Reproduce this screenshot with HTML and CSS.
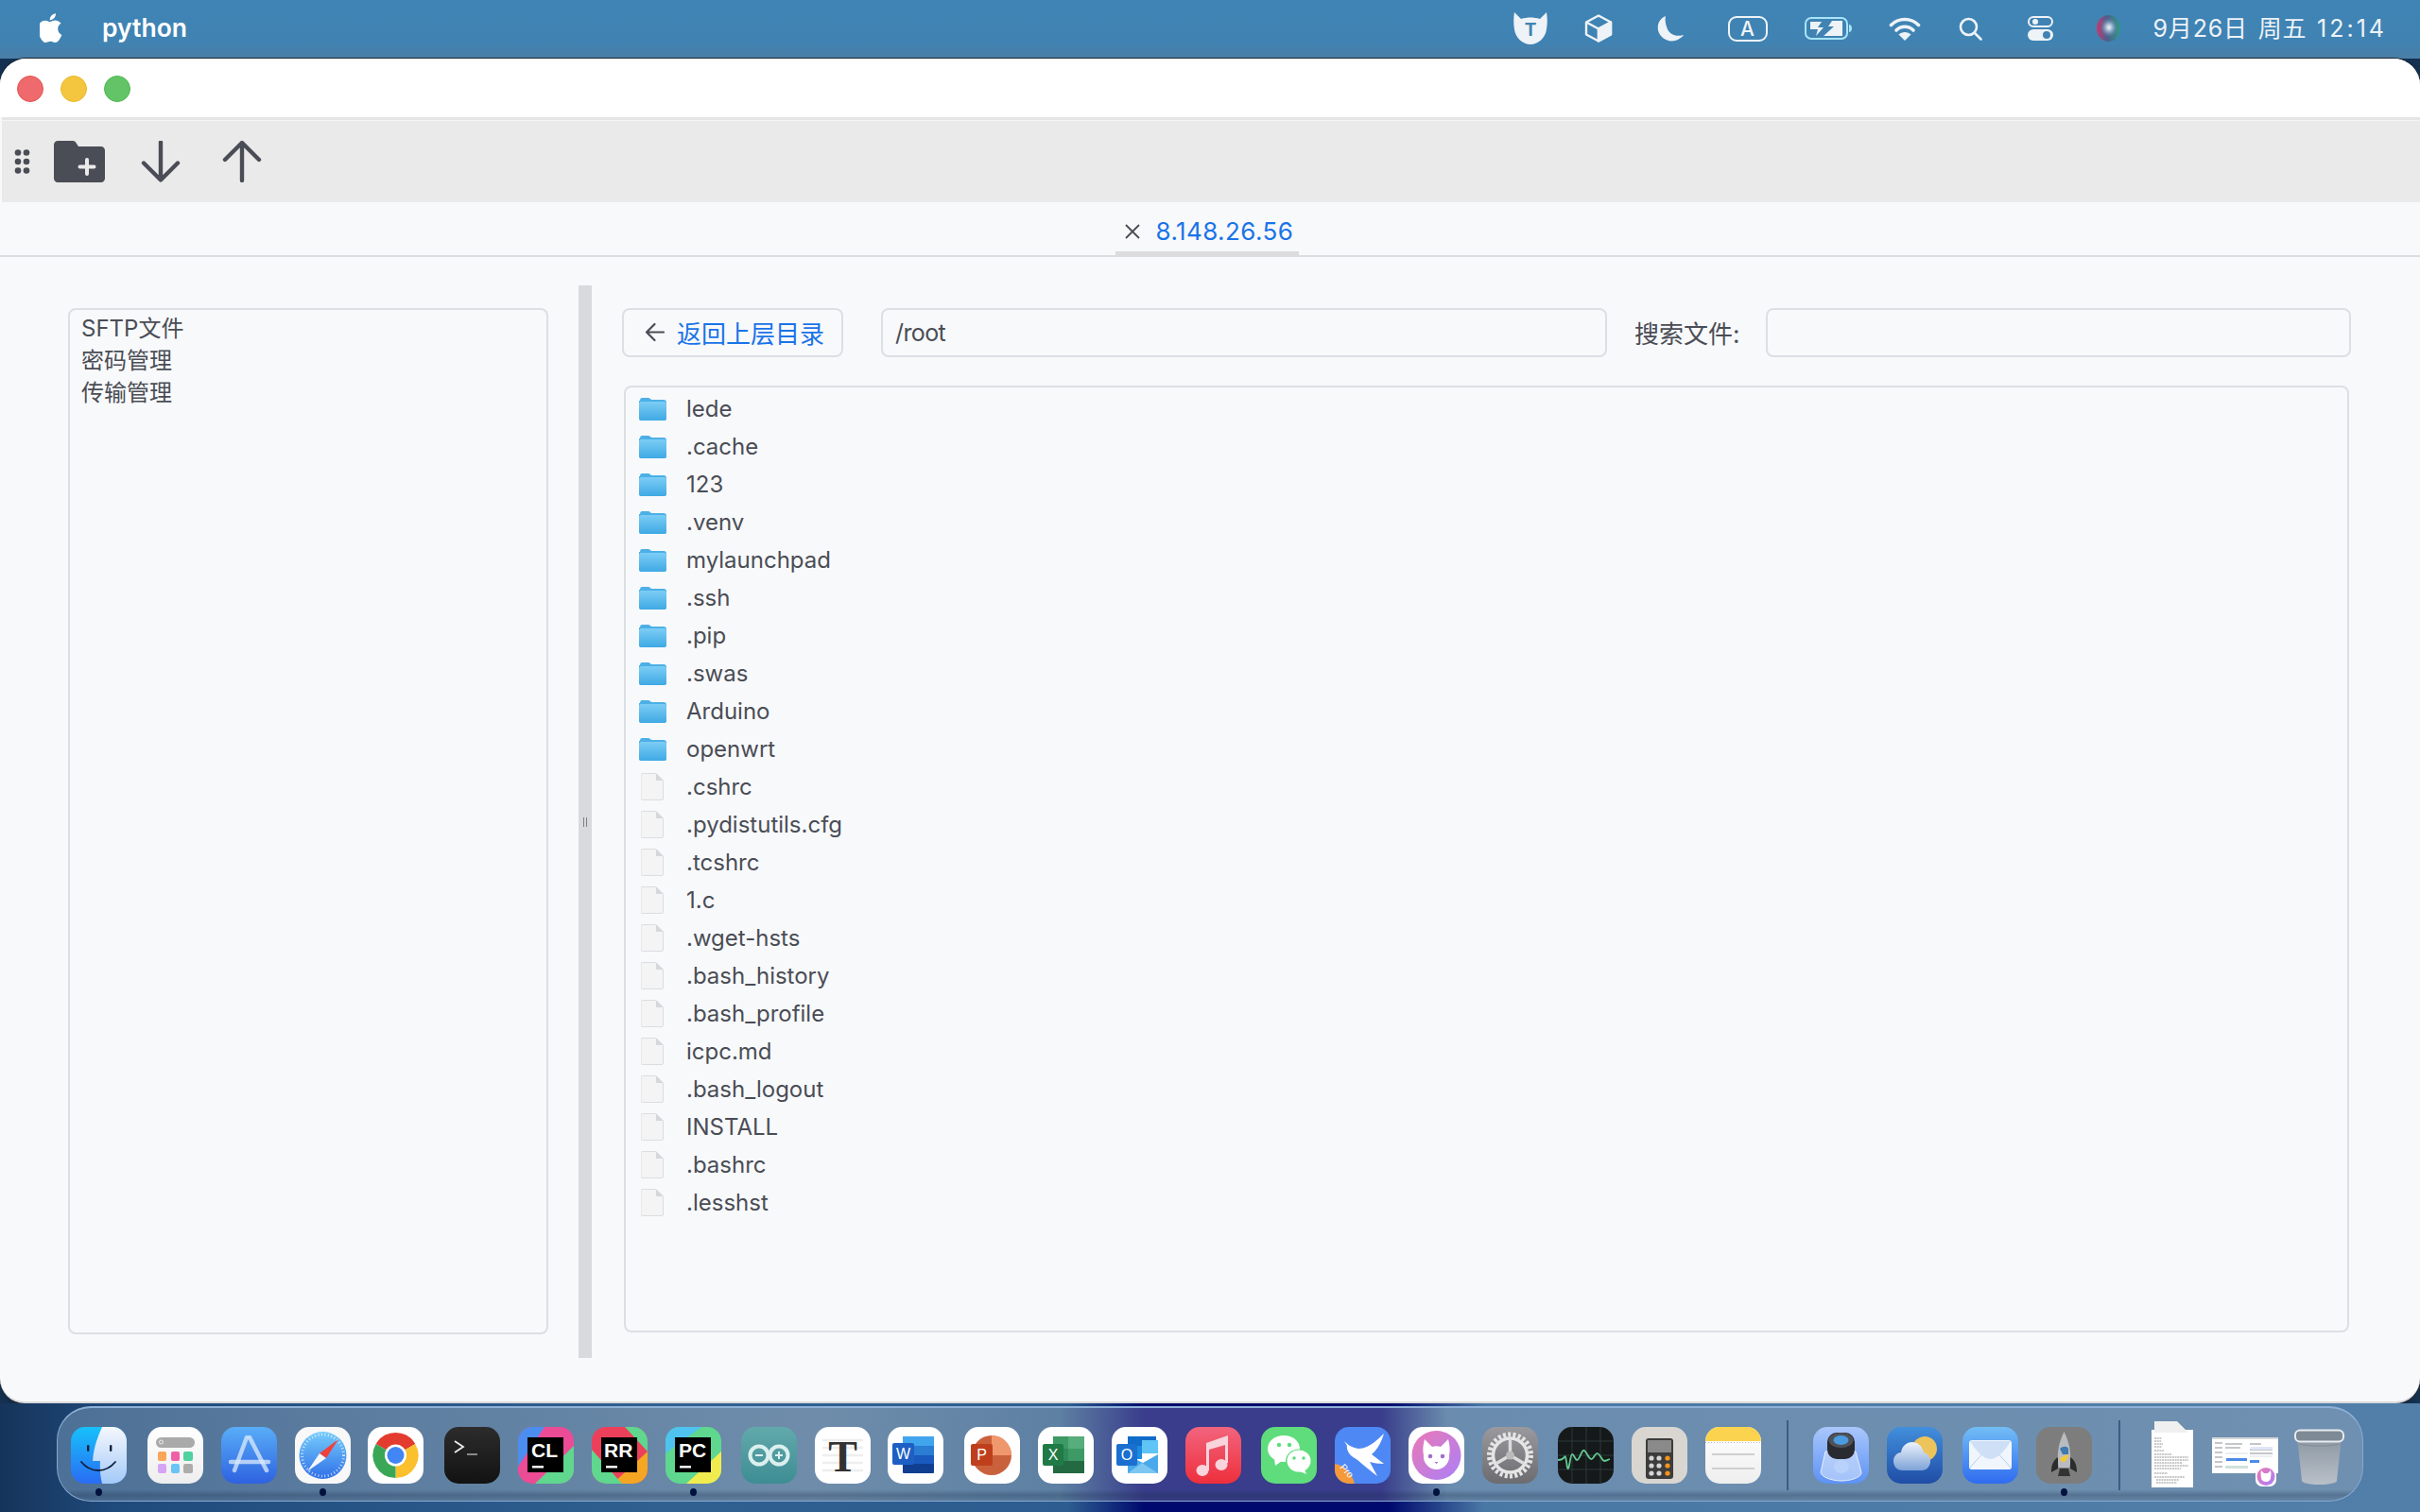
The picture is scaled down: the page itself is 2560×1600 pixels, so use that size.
FILE: index.html
```html
<!DOCTYPE html>
<html lang="zh">
<head>
<meta charset="utf-8">
<title>python</title>
<link rel="stylesheet" href="styles.css">
</head>
<body>
<svg class="defs" aria-hidden="true">
  <defs>
    <linearGradient id="gFolder" x1="0" y1="0" x2="0" y2="1"><stop offset="0" stop-color="#7ccdf5"/><stop offset="1" stop-color="#3fa9e4"/></linearGradient>
    <linearGradient id="gFinder" x1="0" y1="0" x2="0" y2="1"><stop offset="0" stop-color="#17c1fb"/><stop offset="1" stop-color="#2a6cf3"/></linearGradient>
    <linearGradient id="gFace" x1="0" y1="0" x2="0" y2="1"><stop offset="0" stop-color="#f5f7fd"/><stop offset="1" stop-color="#a3caf8"/></linearGradient>
    <linearGradient id="gStore" x1="0" y1="0" x2="0" y2="1"><stop offset="0" stop-color="#58adf8"/><stop offset="1" stop-color="#2e62e0"/></linearGradient>
    <linearGradient id="gSafari" x1="0" y1="0" x2="0" y2="1"><stop offset="0" stop-color="#76cdfb"/><stop offset="1" stop-color="#2f6fe8"/></linearGradient>
    <linearGradient id="gTerm" x1="0" y1="0" x2="0" y2="1"><stop offset="0" stop-color="#2c2c2c"/><stop offset="1" stop-color="#121212"/></linearGradient>
    <linearGradient id="gArd" x1="0" y1="0" x2="0" y2="1"><stop offset="0" stop-color="#62a9ab"/><stop offset="1" stop-color="#3d8d94"/></linearGradient>
    <linearGradient id="gMusic" x1="0" y1="0" x2="0" y2="1"><stop offset="0" stop-color="#f2647d"/><stop offset="1" stop-color="#ee2f3c"/></linearGradient>
    <linearGradient id="gCat" x1="0" y1="0" x2="1" y2="1"><stop offset="0" stop-color="#ec78b4"/><stop offset="1" stop-color="#aa80f8"/></linearGradient>
    <linearGradient id="gGear" x1="0" y1="0" x2="0" y2="1"><stop offset="0" stop-color="#9a9a9e"/><stop offset="1" stop-color="#6c6c70"/></linearGradient>
    <linearGradient id="gPrev" x1="0" y1="0" x2="0" y2="1"><stop offset="0" stop-color="#a9c7fb"/><stop offset="1" stop-color="#5e92f5"/></linearGradient>
    <linearGradient id="gWeather" x1="0" y1="0" x2="0" y2="1"><stop offset="0" stop-color="#428fdc"/><stop offset="1" stop-color="#1f4da6"/></linearGradient>
    <linearGradient id="gCloud" x1="0" y1="0" x2="0" y2="1"><stop offset="0" stop-color="#eef3fb"/><stop offset="1" stop-color="#7ea3d8"/></linearGradient>
    <linearGradient id="gMail" x1="0" y1="0" x2="0" y2="1"><stop offset="0" stop-color="#72bdf5"/><stop offset="1" stop-color="#2f6cf0"/></linearGradient>
    <linearGradient id="gNoteW" x1="0" y1="0" x2="0" y2="1"><stop offset="0" stop-color="#ffffff"/><stop offset="1" stop-color="#eeeeee"/></linearGradient>
    <linearGradient id="gTrash" x1="0" y1="0" x2="0" y2="1"><stop offset="0" stop-color="#8b96a2"/><stop offset="1" stop-color="#b9c0c8"/></linearGradient>
    <linearGradient id="gSiriB" x1="0" y1="0" x2="1" y2="0"><stop offset="0" stop-color="#c9376f"/><stop offset=".45" stop-color="#4a5f8c"/><stop offset="1" stop-color="#2f9a86"/></linearGradient>
    <radialGradient id="gSiri"><stop offset="0" stop-color="#f2f6fa"/><stop offset=".35" stop-color="#a8bfd8" stop-opacity=".9"/><stop offset="1" stop-color="#4a6f9f" stop-opacity="0"/></radialGradient>
    <clipPath id="clipSq"><rect width="59" height="60" rx="15"/></clipPath>
    <symbol id="folder" viewBox="0 0 29 25">
      <path d="M1 4C1 2 2 1 3 1h7c1 0 2 1 3 2h13c2 0 3 1 3 3v16c0 2-1 3-3 3H3c-2 0-3-1-3-3V4z" fill="#4cb0e6"/>
      <rect y="5" width="29" height="20" rx="2.5" fill="url(#gFolder)"/>
    </symbol>
    <symbol id="file" viewBox="0 0 24 29">
      <path d="M1.5.5H16L23.5 8v19a1.500 1.500 0 0 1-1.500 1.500h-20.500A1.500 1.500 0 0 1 0 27V2A1.500 1.500 0 0 1 1.500.5z" fill="#f4f4f5" stroke="#dcdde0"/>
      <path d="M16 .5V7a1 1 0 0 0 1 1h6.500z" fill="#d6d7da"/>
    </symbol>
  </defs>
</svg>

<div class="desktop">
  <header class="menubar">
    <svg class="apple" viewBox="3 0.500 19 22.500"><path fill="#fff" d="M17.050 12.540c-.03-2.850 2.330-4.220 2.440-4.290-1.330-1.940-3.400-2.210-4.130-2.240-1.760-.18-3.430 1.030-4.320 1.030-.89 0-2.270-1.010-3.730-.98-1.920.03-3.690 1.120-4.680 2.830-2 3.460-.51 8.580 1.430 11.390.95 1.370 2.080 2.920 3.560 2.860 1.430-.06 1.970-.92 3.700-.92 1.730 0 2.210.92 3.720.89 1.540-.03 2.510-1.400 3.450-2.780 1.090-1.590 1.530-3.130 1.560-3.210-.03-.02-2.990-1.150-3.010-4.580zM14.200 4.160c.79-.96 1.320-2.280 1.180-3.600-1.130.05-2.510.76-3.320 1.710-.73.84-1.370 2.190-1.200 3.480 1.260.1 2.550-.64 3.340-1.590z"/></svg>
    <span class="appname">python</span>
    <div class="status">
      <svg class="st st-cat" viewBox="0 0 36 34"><path fill="#eef3f7" d="M1 0l7 7c7-2 13-2 20 0l7-7c1 6 1 12 0 18-1 9-9 16-17 16S2 27 1 18C0 12 0 6 1 0z"/><text x="18" y="25" text-anchor="middle" class="st-t">T</text></svg>
      <svg class="st st-box" viewBox="0 0 30 30" fill="none" stroke="#eef3f7" stroke-width="2.400" stroke-linejoin="round"><path d="M15 1.500l13 7v13l-13 7-13-7v-13z"/><path d="M2 8.500l13 7v13M15 15.500l13-7"/><path d="M15 15.500l13-7v13l-13 7z" fill="#eef3f7"/></svg>
      <svg class="st st-moon" viewBox="0 0 28 27"><path fill="#eef3f7" d="M9 0C2 3 0 9 1 15c2 8 10 13 18 11 4-1 7-3 9-6-8 2-14 0-17-6C9 9 8 4 9 0z"/></svg>
      <div class="st st-a">A</div>
      <svg class="st st-bat" viewBox="0 0 51 24"><rect x="1" y="1" width="44" height="22" rx="6" fill="none" stroke="#a8e4f7" stroke-width="2"/><path d="M47 8c2 0 3 2 3 4s-1 4-3 4z" fill="#a8e4f7"/><path d="M5 5h13l-4 6h6l-8 9 2-7H6V5z" fill="#eef3f7"/><path d="M26 4h14v16H20l7-8h-4l3-8z" fill="#eef3f7"/><path d="M24 4l-4 8h5l-5 8 11-10h-6l4-6z" fill="#4083b3"/></svg>
      <svg class="st st-wifi" viewBox="0 0 34 25" fill="none" stroke="#eef3f7" stroke-width="3.600" stroke-linecap="round"><path d="M2.500 8.500C10.500 .5 23.500 .5 31.500 8.500"/><path d="M8 14c5-5 13-5 18 0"/><path d="M17 25l-6.500-6.500c3.500-3.500 9.500-3.500 13 0z" fill="#eef3f7" stroke="none"/></svg>
      <svg class="st st-search" viewBox="0 0 25 25" fill="none" stroke="#eef3f7" stroke-width="2.600" stroke-linecap="round"><circle cx="10.500" cy="10.500" r="8.500"/><path d="M17 17l6.500 6.500"/></svg>
      <svg class="st st-toggle" viewBox="0 0 27 26"><rect x="1" y="1" width="25" height="10" rx="5" fill="none" stroke="#eef3f7" stroke-width="2"/><circle cx="8" cy="6" r="3" fill="#eef3f7"/><rect y="14" width="27" height="12" rx="6" fill="#eef3f7"/><circle cx="20" cy="20" r="4" fill="#4083b3"/></svg>
      <svg class="st st-siri" viewBox="0 0 25 28"><ellipse cx="12.500" cy="14" rx="12.500" ry="14" fill="url(#gSiriB)"/><ellipse cx="13" cy="13" rx="10" ry="11" fill="url(#gSiri)"/></svg>
      <span class="clock">9月26日 周五 <span class="time">12:14</span></span>
    </div>
  </header>

  <main class="window">
    <div class="titlebar">
      <span class="light light-r"></span>
      <span class="light light-y"></span>
      <span class="light light-g"></span>
    </div>
    <div class="toolbar">
      <svg class="grip" viewBox="0 0 17 26"><g fill="#4a4d55"><circle cx="4" cy="3.500" r="3.300"/><circle cx="13" cy="3.500" r="3.300"/><circle cx="4" cy="13" r="3.300"/><circle cx="13" cy="13" r="3.300"/><circle cx="4" cy="22.500" r="3.300"/><circle cx="13" cy="22.500" r="3.300"/></g></svg>
      <svg class="tool-folder" viewBox="0 0 54 44"><path fill="#4a4d55" d="M4 0h16c2 0 3 1 4 3l2 3h24c2 0 4 2 4 4v30c0 2-2 4-4 4H4c-2 0-4-2-4-4V4c0-2 2-4 4-4z"/><path d="M35 20v15M27.500 27.500h15" stroke="#eaeaea" stroke-width="4" stroke-linecap="round"/></svg>
      <svg class="tool-arrow" viewBox="0 0 42 44" fill="none" stroke="#4a4d55" stroke-width="4.400" stroke-linecap="round" stroke-linejoin="round"><path d="M21 2v39M3 24l18 18 18-18" transform="translate(0 -0.500)"/></svg>
      <svg class="tool-arrow tool-up" viewBox="0 0 42 44" fill="none" stroke="#4a4d55" stroke-width="4.400" stroke-linecap="round" stroke-linejoin="round"><path d="M21 42V3M3 20L21 2l18 18"/></svg>
    </div>
    <div class="tabs">
      <div class="tab">
        <svg class="tab-x" viewBox="0 0 16 16" fill="none" stroke="#4a4d55" stroke-width="1.800"><path d="M1 1l14 14M15 1L1 15"/></svg>
        <span class="tab-label">8.148.26.56</span>
      </div>
    </div>
    <div class="pane">
      <aside class="left">
        <ul class="menu">
          <li>SFTP文件</li>
          <li>密码管理</li>
          <li>传输管理</li>
        </ul>
      </aside>
      <div class="splitter"><span class="handle"></span></div>
      <section class="right">
        <div class="pathbar">
          <button class="back">
            <svg class="back-arrow" viewBox="0 0 21 21" fill="none" stroke="#4a4d55" stroke-width="2.200" stroke-linecap="round" stroke-linejoin="round"><path d="M20 10.500H2M10.500 2L2 10.500l8.500 8.500"/></svg>
            <span>返回上层目录</span>
          </button>
          <div class="field field-path">/root</div>
          <label class="search-label">搜索文件:</label>
          <div class="field field-search"></div>
        </div>
        <div class="files">
          <div class="row"><svg class="ic-folder"><use href="#folder"/></svg><span>lede</span></div>
          <div class="row"><svg class="ic-folder"><use href="#folder"/></svg><span>.cache</span></div>
          <div class="row"><svg class="ic-folder"><use href="#folder"/></svg><span>123</span></div>
          <div class="row"><svg class="ic-folder"><use href="#folder"/></svg><span>.venv</span></div>
          <div class="row"><svg class="ic-folder"><use href="#folder"/></svg><span>mylaunchpad</span></div>
          <div class="row"><svg class="ic-folder"><use href="#folder"/></svg><span>.ssh</span></div>
          <div class="row"><svg class="ic-folder"><use href="#folder"/></svg><span>.pip</span></div>
          <div class="row"><svg class="ic-folder"><use href="#folder"/></svg><span>.swas</span></div>
          <div class="row"><svg class="ic-folder"><use href="#folder"/></svg><span>Arduino</span></div>
          <div class="row"><svg class="ic-folder"><use href="#folder"/></svg><span>openwrt</span></div>
          <div class="row"><svg class="ic-file"><use href="#file"/></svg><span>.cshrc</span></div>
          <div class="row"><svg class="ic-file"><use href="#file"/></svg><span>.pydistutils.cfg</span></div>
          <div class="row"><svg class="ic-file"><use href="#file"/></svg><span>.tcshrc</span></div>
          <div class="row"><svg class="ic-file"><use href="#file"/></svg><span>1.c</span></div>
          <div class="row"><svg class="ic-file"><use href="#file"/></svg><span>.wget-hsts</span></div>
          <div class="row"><svg class="ic-file"><use href="#file"/></svg><span>.bash_history</span></div>
          <div class="row"><svg class="ic-file"><use href="#file"/></svg><span>.bash_profile</span></div>
          <div class="row"><svg class="ic-file"><use href="#file"/></svg><span>icpc.md</span></div>
          <div class="row"><svg class="ic-file"><use href="#file"/></svg><span>.bash_logout</span></div>
          <div class="row"><svg class="ic-file"><use href="#file"/></svg><span>INSTALL</span></div>
          <div class="row"><svg class="ic-file"><use href="#file"/></svg><span>.bashrc</span></div>
          <div class="row"><svg class="ic-file"><use href="#file"/></svg><span>.lesshst</span></div>
        </div>
      </section>
    </div>
  </main>

  <footer class="dock-area">
    <nav class="dock">
      <div class="di"><svg viewBox="0 0 59 60"><rect width="59" height="60" rx="15" fill="url(#gFinder)"/><path clip-path="url(#clipSq)" d="M33 0C28 11 24 22 23 36h8c-.5 8 0 16 2 24h26V0z" fill="url(#gFace)"/><g fill="#10203f"><rect x="17" y="19" width="2.400" height="7" rx="1.200"/><rect x="41" y="19" width="2.400" height="7" rx="1.200"/></g><path d="M11 37c10 12 26 12 36 0" fill="none" stroke="#10203f" stroke-width="1.800" stroke-linecap="round"/></svg><i class="dot"></i></div>
      <div class="di m3"><svg viewBox="0 0 59 60"><rect width="59" height="60" rx="15" fill="url(#gNoteW)"/><rect x="9" y="11" width="41" height="11" rx="5.500" fill="#aaaaaa"/><circle cx="14.500" cy="16" r="2" fill="none" stroke="#eee"/><rect x="11" y="26" width="9" height="10" rx="2" fill="#f9a55a"/><rect x="25" y="26" width="9" height="10" rx="2" fill="#ef5fa7"/><rect x="38" y="26" width="10" height="10" rx="2" fill="#4fd1a1"/><rect x="11" y="39" width="9" height="10" rx="2" fill="#d6a4f5"/><rect x="25" y="39" width="9" height="10" rx="2" fill="#6cc4f5"/><rect x="38" y="39" width="10" height="10" rx="2" fill="#adadad"/></svg></div>
      <div class="di"><svg viewBox="0 0 59 60"><rect width="59" height="60" rx="15" fill="url(#gStore)"/><g stroke="#dcebfd" stroke-opacity=".75" stroke-width="4.500" stroke-linecap="round"><path d="M27 11L14 46"/><path d="M30 11l18 35"/><path d="M10 37h40"/></g></svg></div>
      <div class="di"><svg viewBox="0 0 59 60"><rect width="59" height="60" rx="15" fill="#f8f8f8"/><circle cx="29.500" cy="30" r="25" fill="url(#gSafari)"/><circle cx="29.500" cy="30" r="22" fill="none" stroke="#fff" stroke-opacity=".7" stroke-width="3" stroke-dasharray="1 2.500"/><path d="M46 13L26 28l7 5z" fill="#f0403a"/><path d="M13 47l13-19 7 5z" fill="#f4f6fa"/></svg><i class="dot"></i></div>
      <div class="di m-1"><svg viewBox="0 0 59 60"><rect width="59" height="60" rx="15" fill="#fff"/><path d="M29.500 30L8.700 18A24 24 0 0 1 50.300 18z" fill="#e33b2e"/><path d="M29.500 30L50.300 18A24 24 0 0 1 29.500 54z" fill="#fbc02d"/><path d="M29.500 30V54A24 24 0 0 1 8.700 18z" fill="#3aa757"/><circle cx="29.500" cy="30" r="11.500" fill="#fff"/><circle cx="29.500" cy="30" r="9" fill="#4285f4"/></svg></div>
      <div class="di m3"><svg viewBox="0 0 59 60"><rect width="59" height="60" rx="15" fill="url(#gTerm)"/><path d="M11 15l9 6-9 6" fill="none" stroke="#eee" stroke-width="1.800"/><path d="M24 29h11" stroke="#888" stroke-width="2"/></svg></div>
      <div class="di"><svg viewBox="0 0 59 60"><g clip-path="url(#clipSq)"><rect width="59" height="60" fill="#ec4b95"/><path d="M0 0h28L0 42z" fill="#4c8df0"/><path d="M59 20v40H18z" fill="#5fd78e"/></g><rect x="10" y="11" width="38" height="37" fill="#000"/><text x="14" y="32" class="jb">CL</text><rect x="15" y="41" width="12" height="2.500" fill="#fff"/></svg></div>
      <div class="di"><svg viewBox="0 0 59 60"><g clip-path="url(#clipSq)"><rect width="59" height="60" fill="#ec3f5a"/><path d="M35 0h24v26z" fill="#5fd78e"/><path d="M59 26v34H22z" fill="#f5a623"/><path d="M0 24v36h32z" fill="#5fd78e"/></g><rect x="10" y="11" width="38" height="37" fill="#000"/><text x="13" y="32" class="jb">RR</text><rect x="15" y="41" width="12" height="2.500" fill="#fff"/></svg></div>
      <div class="di"><svg viewBox="0 0 59 60"><g clip-path="url(#clipSq)"><rect width="59" height="60" fill="#5fd78e"/><path d="M0 0h38L0 28z" fill="#4fc3f0"/><path d="M59 26v34H22z" fill="#f0ec50"/></g><rect x="10" y="11" width="38" height="37" fill="#000"/><text x="14" y="32" class="jb">PC</text><rect x="15" y="41" width="12" height="2.500" fill="#fff"/></svg><i class="dot"></i></div>
      <div class="di m2"><svg viewBox="0 0 59 60"><rect width="59" height="60" rx="15" fill="url(#gArd)"/><g fill="none" stroke="#dcefef" stroke-width="4"><circle cx="19" cy="30" r="9.500"/><circle cx="40" cy="30" r="9.500"/></g><path d="M15 30h8M36 30h8M40 26v8" stroke="#dcefef" stroke-width="2"/></svg></div>
      <div class="di"><svg viewBox="0 0 59 60"><rect width="59" height="60" rx="15" fill="#fff"/><g stroke="#eeeeee" stroke-width="2.500"><path d="M8 14h43M8 22h43M8 30h43M8 38h43M8 46h43"/></g><text x="29.500" y="47" text-anchor="middle" class="serif-t">T</text></svg></div>
      <div class="di m-1"><svg viewBox="0 0 59 60"><rect width="59" height="60" rx="15" fill="#fff"/><rect x="16" y="10" width="33" height="11" fill="#41a5ee"/><rect x="16" y="20" width="33" height="10" fill="#2b7cd3"/><rect x="16" y="30" width="33" height="10" fill="#185abd"/><rect x="16" y="39" width="33" height="10" rx="1" fill="#103f91"/><rect x="5" y="17" width="23" height="23" rx="2" fill="#1e5fc4"/><text x="16.500" y="34" text-anchor="middle" class="ms">W</text></svg></div>
      <div class="di m3"><svg viewBox="0 0 59 60"><rect width="59" height="60" rx="15" fill="#fff"/><circle cx="29" cy="30" r="21" fill="#c9623c"/><path d="M29 9a21 21 0 0 1 21 21H29z" fill="#f0986d"/><rect x="7" y="18" width="23" height="23" rx="2" fill="#bf3f1c"/><text x="18.500" y="35" text-anchor="middle" class="ms">P</text></svg></div>
      <div class="di"><svg viewBox="0 0 59 60"><rect width="59" height="60" rx="15" fill="#fff"/><rect x="16" y="10" width="33" height="39" rx="1.500" fill="#2f8a58"/><rect x="32" y="10" width="17" height="13" fill="#57ad7b"/><rect x="16" y="10" width="16" height="13" fill="#3d9a64"/><rect x="32" y="23" width="17" height="13" fill="#3d9a64"/><rect x="16" y="36" width="33" height="13" fill="#236a42"/><rect x="5" y="18" width="22" height="23" rx="2" fill="#207a45"/><text x="16" y="35" text-anchor="middle" class="ms">X</text></svg></div>
      <div class="di"><svg viewBox="0 0 59 60"><rect width="59" height="60" rx="15" fill="#fff"/><rect x="17" y="10" width="30" height="12" fill="#0f6cc9"/><rect x="32" y="14" width="17" height="14" fill="#5fc4f6"/><rect x="17" y="20" width="15" height="14" fill="#1b8ce0"/><path d="M17 30l16 8 16-9v20H17z" fill="#4aa9ea"/><path d="M17 49l15-11 17 11z" fill="#7cc6f2"/><rect x="5" y="18" width="22" height="23" rx="2" fill="#1a6fd0"/><text x="16" y="35" text-anchor="middle" class="ms">O</text></svg></div>
      <div class="di"><svg viewBox="0 0 59 60"><rect width="59" height="60" rx="15" fill="url(#gMusic)"/><g fill="#f9d4dc"><path d="M22 17l23-8v29h-3V19l-17 5v22h-3z"/><ellipse cx="18" cy="46" rx="6.500" ry="6"/><ellipse cx="38" cy="40" rx="6.500" ry="6"/></g></svg></div>
      <div class="di m2"><svg viewBox="0 0 59 60"><rect width="59" height="60" rx="15" fill="#5fdc7c"/><ellipse cx="24" cy="23" rx="17" ry="14" fill="#fff"/><path d="M14 33l1 8 7-5z" fill="#fff"/><ellipse cx="40" cy="36" rx="14" ry="12.500" fill="#5fdc7c"/><ellipse cx="40" cy="36" rx="12.500" ry="11.500" fill="#fff"/><path d="M46 45l2 5-7-3z" fill="#fff"/><g fill="#5fdc7c"><circle cx="19" cy="19" r="2.200"/><circle cx="30" cy="19" r="2.200"/><circle cx="35" cy="33" r="1.800"/><circle cx="45" cy="33" r="1.800"/></g></svg></div>
      <div class="di"><svg viewBox="0 0 59 60"><g clip-path="url(#clipSq)"><rect width="59" height="60" fill="#4e88f5"/><path d="M0 39c9 1 19 11 21 21H0z" fill="#f49a3a"/></g><path d="M10 15c5 5 9 7 15 8 8 0 16-5 27-16-3 10-7 17-13 22l13 10c-6 0-11-1-15-2l8 15C34 44 26 36 21 33c-6-3-9-10-8-13l-3-5z" fill="#fff"/><text class="pro" transform="translate(5 43) rotate(48)">Pro</text></svg></div>
      <div class="di"><svg viewBox="0 0 59 60"><rect width="59" height="60" rx="15" fill="#fff"/><circle cx="29.500" cy="30" r="26" fill="url(#gCat)"/><path d="M17 13l8 8c3-1 6-1 9 0l8-8c2 8 2 13 1 17 1 8-6 15-13.500 15S15 38 16 30c-1-4-1-9 1-17z" fill="#fff"/><g fill="#a46ec9"><circle cx="23" cy="31" r="2.300"/><circle cx="36" cy="31" r="2.300"/><path d="M27.500 37h4l-2 2z"/></g></svg><i class="dot"></i></div>
      <div class="di"><svg viewBox="0 0 59 60"><rect width="59" height="60" rx="15" fill="url(#gGear)"/><g fill="none" stroke="#e5e5e6"><circle cx="29.500" cy="30" r="22" stroke-width="5" stroke-dasharray="3 2.300"/><circle cx="29.500" cy="30" r="18" stroke-width="3.500"/></g><g stroke="#dcdcdd" stroke-width="3.500" stroke-linecap="round"><path d="M29.500 30V15M29.500 30L16 38M29.500 30L43 38"/></g><circle cx="29.500" cy="30" r="4.500" fill="#bbb"/></svg></div>
      <div class="di m2"><svg viewBox="0 0 59 60"><rect width="59" height="60" rx="15" fill="#15191a"/><g stroke="#2d3b38"><path d="M0 15h59M0 30h59M0 45h59M15 0v60M30 0v60M45 0v60"/></g><path d="M0 35c3 0 4 0 6-2 2-3 2-4 4 10 2 6 3-14 5-14 2 0 3 5 5 6 3 1 5-12 8-10 3 2 4 8 7 9s4-7 7-6c3 1 4 7 7 8 2 0 3-1 6-2" fill="none" stroke="#63c78f" stroke-width="1.800"/></svg></div>
      <div class="di"><svg viewBox="0 0 59 60"><rect width="59" height="60" rx="15" fill="#d9d6d2"/><rect x="15" y="12" width="29" height="43" rx="3" fill="#3c3c3c"/><rect x="17" y="14" width="25" height="13" fill="#8a8a8a"/><g fill="#d5d5d5"><circle cx="21" cy="33" r="2.600"/><circle cx="29" cy="33" r="2.600"/><circle cx="21" cy="41" r="2.600"/><circle cx="29" cy="41" r="2.600"/><circle cx="21" cy="49" r="2.600"/><circle cx="29" cy="49" r="2.600"/></g><g fill="#f6941d"><circle cx="38" cy="33" r="2.600"/><circle cx="38" cy="41" r="2.600"/><circle cx="38" cy="49" r="2.600"/></g></svg></div>
      <div class="di"><svg viewBox="0 0 59 60"><g clip-path="url(#clipSq)"><rect width="59" height="60" fill="url(#gNoteW)"/><rect width="59" height="15" fill="#fbd34e"/><path d="M0 16.500h59" stroke="#bbb" stroke-dasharray="1 2"/><path d="M7 29h45M7 44h45" stroke="#cfcfcf" stroke-width="2"/></g></svg></div>
      <div class="sep m8"></div>
      <div class="di m7"><svg viewBox="0 0 59 60"><rect width="59" height="60" rx="15" fill="url(#gPrev)"/><path d="M13 26h32l6 22c1 4-9 9-21 9S8 52 8 48z" fill="#dce9fd" fill-opacity=".55" stroke="#e8f0fd"/><ellipse cx="30" cy="42" rx="8" ry="7" fill="#b9d2fb"/><rect x="15" y="6" width="29" height="28" rx="10" fill="#2a2b30"/><ellipse cx="29.500" cy="14" rx="13" ry="8" fill="#4f5158"/><ellipse cx="29.500" cy="14" rx="8" ry="5" fill="#4b9be0"/></svg></div>
      <div class="di"><svg viewBox="0 0 59 60"><rect width="59" height="60" rx="15" fill="url(#gWeather)"/><circle cx="40" cy="23" r="13" fill="#ecc45b"/><path d="M17 46c-7 0-10-5-10-10s4-9 8-9c1-7 6-11 12-11 7 0 11 6 12 11 4 1 7 5 7 9 0 6-4 10-9 10z" fill="url(#gCloud)"/></svg></div>
      <div class="di m2"><svg viewBox="0 0 59 60"><rect width="59" height="60" rx="15" fill="url(#gMail)"/><rect x="7" y="14" width="45" height="31" rx="3" fill="#f1f6fd"/><path d="M7 44l17-19M52 44L35 25" stroke="#b7cdea" stroke-width="1"/><path d="M8 15c4 7 13 19 21.500 19S47 22 51 15z" fill="#cfe0f6"/></svg></div>
      <div class="di"><svg viewBox="0 0 59 60"><rect width="59" height="60" rx="15" fill="#7d7d7d"/><path d="M29.500 5c6 12 8 24 6 38h-12c-2-14 0-26 6-38z" fill="#b8bcc0"/><path d="M23 32c-6 4-7 10-7 16l7-4zM36 32c6 4 7 10 7 16l-7-4z" fill="#2c2c2c"/><path d="M25 44h9l2 8h-13z" fill="#333"/><path d="M25 23c3-3 8-3 9 0v6h-6z" fill="#3d7ab0"/><path d="M34 29c0 3-1 7-5 8-3 0-4-2-4-4l6-3z" fill="#f0c93e"/></svg><i class="dot"></i></div>
      <div class="sep m9"></div>
      <div class="doc m13"><svg viewBox="0 0 45 70"><path d="M4 9h36l5 0v61H1V9z" fill="#fff"/><path d="M4 0h24l12 12H4z" fill="#f0f0f0"/><path d="M4 18h8M4 21h7M4 24h9M4 27h8M4 31h10M4 35h18M4 38h36M4 41h36M4 44h30M4 47h36M4 50h28M4 55h14M4 59h32M6 62h24M6 65h22" stroke="#777" stroke-width=".8" stroke-dasharray="2 .7"/></svg></div>
      <div class="shot m1"><svg viewBox="0 0 70 52"><rect width="70" height="38" fill="#fff"/><rect y="0" width="70" height="2" fill="#d5d7db"/><path d="M3 6h8M3 11h8M3 16h8M3 21h8M3 26h8M3 31h8M14 7h18M14 11h16M40 7h12M40 13h24M40 17h24" stroke="#8a8d95" stroke-width="1.200"/><rect x="15" y="22" width="22" height="3" fill="#4d8be8"/><rect x="41" y="10" width="23" height="3" fill="#dfe6f7"/><rect x="40" y="24" width="10" height="3" fill="#4d8be8"/><rect x="14" y="30" width="24" height="3" fill="#cfe3da"/><path d="M14 17h24M40 20h24" stroke="#dcdee2"/><rect x="46" y="31" width="22" height="21" rx="7" fill="#fff"/><ellipse cx="57" cy="41.500" rx="9.500" ry="9.500" fill="url(#gCat)"/><path d="M52 35l3 3h4l3-3c1 4 0 6 0 8 0 2-2 4-5 4s-5-2-5-4c0-2-1-4 0-8z" fill="#fff"/></svg></div>
      <div class="trash m-2"><svg viewBox="0 0 53 59"><path d="M3 8l5 47c0 2 8 4 18.500 4S45 57 45 55l5-47z" fill="url(#gTrash)"/><path d="M5 16c12 3 31 3 43 0" fill="none" stroke="#6f7a86" stroke-opacity=".5"/><rect x="1" y="1.500" width="51" height="12" rx="5" fill="#7e8a96" stroke="#e8ecf0" stroke-width="2"/></svg></div>
    </nav>
  </footer>
</div>
</body>
</html>
```

FILE: styles.css
```css
* { box-sizing: border-box; }
html, body { margin: 0; padding: 0; }
body {
  width: 2560px;
  height: 1600px;
  overflow: hidden;
  font-family: "Inter", "Noto Sans CJK SC", sans-serif;
  color: #4a4d55;
}
.defs { position: absolute; width: 0; height: 0; }
.desktop {
  width: 2560px;
  height: 1600px;
  display: flex;
  flex-direction: column;
  background: #143152;
}

/* menu bar */
.menubar {
  height: 62px;
  flex: none;
  display: flex;
  align-items: center;
  padding-left: 42px;
  background: linear-gradient(180deg, #3f84b5 0%, #4083b3 70%, #4a7ea6 100%);
  color: #fff;
}
.apple { width: 26px; height: 31px; margin-top: -4px; }
.appname {
  margin-left: 40px;
  font-size: 26.500px;
  font-weight: 600;
  margin-top: -4px;
}
.status {
  margin-left: auto;
  display: flex;
  align-items: center;
  margin-top: -2px;
  padding-right: 38px;
}
.st { flex: none; }
.st-cat { width: 36px; height: 34px; }
.st-t { font: 700 19px "Inter", sans-serif; fill: #4083b3; }
.st-box { width: 30px; height: 30px; margin-left: 39px; }
.st-moon { width: 28px; height: 27px; margin-left: 47px; }
.st-a {
  width: 42px;
  height: 27px;
  margin-left: 47px;
  border: 2px solid #eef3f7;
  border-radius: 9px;
  font-size: 21px;
  font-weight: 500;
  line-height: 23px;
  text-align: center;
  color: #eef3f7;
}
.st-bat { width: 51px; height: 24px; margin-left: 39px; }
.st-wifi { width: 34px; height: 25px; margin-left: 38px; }
.st-search { width: 25px; height: 25px; margin-left: 40px; }
.st-toggle { width: 27px; height: 26px; margin-left: 48px; }
.st-siri { width: 25px; height: 28px; margin-left: 46px; }
.clock {
  margin: -4px 0 0 35px;
  font-size: 25px;
  letter-spacing: 0.800px;
  word-spacing: 3px;
  color: #eef3f7;
  white-space: nowrap;
}
.time { letter-spacing: 3px; margin-right: -3px; }

/* window */
.window {
  height: 1423px;
  flex: none;
  display: flex;
  flex-direction: column;
  background: #f8f9fb;
  border-radius: 28px 28px 26px 26px;
  border-bottom: 2px solid #d9d9db;
  box-shadow: 0 -1px 0 #1c2733, 0 2px 4px #1a2533;
  overflow: hidden;
}
.titlebar {
  height: 62px;
  flex: none;
  display: flex;
  align-items: center;
  gap: 18px;
  padding: 2px 0 0 18px;
  background: #fff;
}
.light { width: 28px; height: 28px; border-radius: 50%; border: 1px solid transparent; }
.light-r { background: #ee6a6c; border-color: #e2534f; }
.light-y { background: #f4c63f; border-color: #eab72b; }
.light-g { background: #62c466; border-color: #4fb853; }
.toolbar {
  height: 90px;
  flex: none;
  display: flex;
  align-items: center;
  padding: 4px 0 0 15px;
  background: linear-gradient(180deg, #e5e5e5 0, #e5e5e5 3px, #f5f5f5 3px, #f5f5f5 4px, #eaeaea 4px);
  box-shadow: inset 2px 0 0 #f8f9fb;
}
.grip { width: 17px; height: 26px; }
.tool-folder { width: 54px; height: 44px; margin-left: 25px; }
.tool-arrow { width: 42px; height: 44px; margin-left: 38px; }
.tool-up { margin-left: 44px; }

/* tabs */
.tabs {
  height: 58px;
  flex: none;
  display: flex;
  justify-content: center;
  border-bottom: 2px solid #dcdde0;
}
.tab {
  width: 194px;
  height: 57px;
  display: flex;
  align-items: center;
  padding: 9px 0 0 10px;
  border-bottom: 5px solid #dcdcdf;
  margin-left: -7px;
}
.tab-x { width: 16px; height: 16px; }
.tab-label {
  margin-left: 17px;
  font-size: 26px;
  color: #1a73e8;
  letter-spacing: 0.400px;
  white-space: nowrap;
}

/* pane */
.pane {
  flex: 1;
  min-height: 0;
  display: flex;
  padding-top: 30px;
  padding-bottom: 46px;
}
.left {
  width: 612px;
  flex: none;
  padding: 24px 32px 25px 72px;
  display: flex;
}
.menu {
  flex: 1;
  list-style: none;
  margin: 0;
  padding: 3px 0 0 12px;
  border: 2px solid #dcdfe3;
  border-radius: 8px;
  font-size: 24px;
  line-height: 34px;
}
.splitter {
  width: 14px;
  flex: none;
  background: #d9dadd;
  display: flex;
  align-items: center;
  justify-content: center;
}
.handle {
  width: 4px;
  height: 10px;
  border-left: 1px solid #7d7f85;
  border-right: 1px solid #7d7f85;
}
.right {
  flex: 1;
  min-width: 0;
  padding: 24px 73px 27px 32px;
  display: flex;
  flex-direction: column;
}
.pathbar {
  height: 52px;
  flex: none;
  display: flex;
  align-items: stretch;
}
.back {
  width: 234px;
  display: flex;
  align-items: center;
  padding: 0 0 2px 22px;
  background: transparent;
  border: 2px solid #dcdfe3;
  border-radius: 8px;
  font: inherit;
  font-size: 26px;
  color: #1a73e8;
}
.back-arrow { width: 21px; height: 21px; margin-right: 13px; flex: none; }
.field {
  border: 2px solid #dcdfe3;
  border-radius: 8px;
  display: flex;
  align-items: center;
  font-size: 25px;
  letter-spacing: -0.600px;
}
.field-path { width: 768px; margin-left: 40px; padding-left: 13px; }
.search-label {
  width: 139px;
  margin-left: 29px;
  padding-bottom: 2px;
  display: flex;
  align-items: center;
  font-size: 26px;
  white-space: nowrap;
}
.field-search { width: 619px; }
.files {
  flex: 1;
  min-height: 0;
  margin: 30px 2px 0 2px;
  padding-top: 2px;
  border: 2px solid #dcdfe3;
  border-radius: 8px;
  overflow: hidden;
}
.row {
  height: 40px;
  display: flex;
  align-items: center;
  padding-left: 14px;
  font-size: 24px;
}
.row span { margin-left: 21px; }
.ic-folder { width: 29px; height: 25px; flex: none; }
.ic-file { width: 24px; height: 29px; flex: none; margin: 0 3px 0 2px; }

/* dock */
.dock-area {
  flex: 1;
  padding: 3px 60px 0;
  background: linear-gradient(90deg, #16345a 0, #1f4a7c 120px, #2f6090 700px, #2d5d90 1130px, #000a6e 1210px, #000a6e 1470px, #4a78a5 1570px, #517fa9 100%);
}
.dock {
  height: 101px;
  display: flex;
  align-items: flex-start;
  gap: 19px;
  padding: 20px 0 0 14px;
  border: 1px solid #86a8cf;
  border-top: 2px solid #8fb1d8;
  border-radius: 36px;
  background:
    linear-gradient(180deg, rgba(255,255,255,0) 88%, rgba(20,40,70,.28) 94%, rgba(20,40,70,.1) 100%),
    linear-gradient(90deg, #4d7096 0, #5b7c9f 300px, #6f8dab 800px, #5d80a3 1060px, #393d8b 1150px, #393d8b 1400px, #6a8cae 1470px, #6f90b0 100%);
}
.di { position: relative; width: 59px; height: 60px; flex: none; }
.di svg { display: block; width: 59px; height: 60px; }
.dot {
  position: absolute;
  left: 26px;
  top: 65px;
  width: 7px;
  height: 8px;
  border-radius: 50%;
  background: #02123f;
}
.m-2 { margin-left: -2px; }
.m-1 { margin-left: -1px; }
.m1 { margin-left: 1px; }
.m2 { margin-left: 2px; }
.m3 { margin-left: 3px; }
.m7 { margin-left: 7px; }
.m8 { margin-left: 8px; }
.m9 { margin-left: 9px; }
.m13 { margin-left: 13px; }
.sep {
  width: 2px;
  height: 74px;
  flex: none;
  margin-top: -7px;
  background: #3d5c82;
}
.doc { width: 45px; height: 70px; flex: none; margin-top: -6px; }
.doc svg { display: block; width: 45px; height: 70px; }
.shot { width: 70px; height: 52px; flex: none; margin-top: 11px; }
.shot svg { display: block; width: 70px; height: 52px; }
.trash { width: 53px; height: 59px; flex: none; margin-top: 2px; }
.trash svg { display: block; width: 53px; height: 59px; }
.jb { font: 700 21px "Liberation Sans", sans-serif; fill: #fff; }
.serif-t { font: 700 46px "Liberation Serif", serif; fill: #333; }
.ms { font: 400 16px "Liberation Sans", sans-serif; fill: #fff; }
.pro { font: 400 10px "Liberation Sans", sans-serif; fill: #fff; }
```
